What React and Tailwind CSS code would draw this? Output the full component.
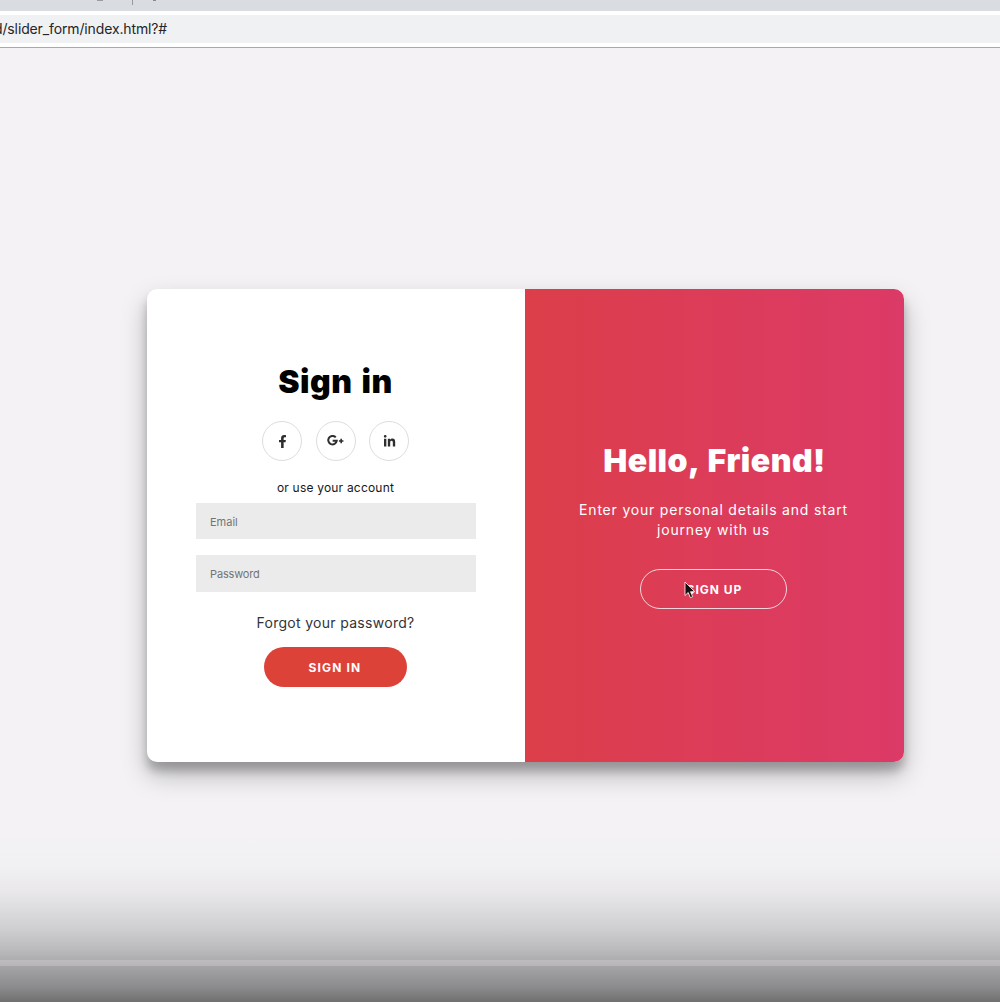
import { FaFacebookF, FaLinkedinIn } from "react-icons/fa";

function SocialLink({ label, children }) {
  return (
    <a href="#" aria-label={label} className="flex size-10 items-center justify-center rounded-full border border-[#dddddd] text-[#2e2e2e]">
      {children}
    </a>
  );
}

function GooglePlus() {
  return (
    <svg viewBox="0 0 18 12" className="h-[11.5px] w-[17px]" fill="none" stroke="currentColor" strokeWidth="2.1">
      <path d="M9.3 2.5A4.5 4.5 0 1 0 10.3 6.1H6" />
      <path d="M12.6 6.2h4.8M15 3.8v4.8" strokeWidth="1.7" />
    </svg>
  );
}

function Cursor() {
  return (
    <svg viewBox="0 0 12 18" className="absolute left-[43px] top-[11px] h-[18px] w-3">
      <path d="M1 1v13.5l3.2-3 2.2 5.2 2.3-1-2.2-5h4.3z" fill="#111" stroke="#fff" strokeWidth="0.8" />
    </svg>
  );
}

function BrowserBar() {
  return (
    <header className="h-12 border-b border-[#a9a9ab] bg-white">
      <div className="flex h-[11px] items-start bg-[#d9dce1]">
        <span className="ml-[97px] h-px w-1.5 bg-[#999ca1]" />
        <span className="ml-[29px] h-[5px] w-px bg-[#96999e]" />
        <span className="ml-5 h-px w-[3px] bg-[#85888d]" />
      </div>
      <div className="mt-1 flex h-7 items-center overflow-hidden bg-[#eff1f3]">
        <span className="-ml-[6px] whitespace-nowrap text-[14px] leading-7 tracking-[-0.13px] text-[#252529]">d/slider_form/index.html?#</span>
      </div>
    </header>
  );
}

export default function App() {
  return (
    <div className="relative h-[1002px] w-[1000px] overflow-hidden bg-[#f4f2f5] font-['Inter',sans-serif]">
      <BrowserBar />
      <main className="ml-[147px] mt-[241px] flex h-[473px] w-[757px] overflow-hidden rounded-[10px] bg-white shadow-[0_13px_26px_rgba(0,0,0,0.25),0_9px_10px_rgba(0,0,0,0.22)]">
        <form className="flex w-[378px] flex-col items-center pl-12 pr-[49px] pt-[73px]">
          <h1 className="h-10 whitespace-nowrap text-[32px] font-black leading-10 tracking-[0.5px] [word-spacing:2px] text-black">Sign in</h1>
          <div className="mt-[19px] flex gap-[13.5px]">
            <SocialLink label="Facebook"><FaFacebookF size={13} /></SocialLink>
            <SocialLink label="Google Plus"><GooglePlus /></SocialLink>
            <SocialLink label="LinkedIn"><FaLinkedinIn size={13} /></SocialLink>
          </div>
          <span className="mt-[17px] h-5 text-[12px] leading-5 tracking-[0.2px] text-[#171719]">or use your account</span>
          <input aria-label="Email" placeholder="Email" className="ml-px mt-[5px] h-9 w-[280px] shrink-0 bg-[#ebebeb] px-[14px] pt-px text-[11px] placeholder:text-[#747474]" />
          <input aria-label="Password" type="password" placeholder="Password" className="ml-px mt-4 h-[37px] w-[280px] shrink-0 bg-[#ebebeb] px-[14px] text-[11px] tracking-[-0.15px] placeholder:text-[#747474]" />
          <a href="#" className="mt-[21px] h-5 whitespace-nowrap text-[14px] leading-5 tracking-[0.3px] text-[#333338]">Forgot your password?</a>
          <button type="button" className="mr-px mt-[14px] h-10 w-[143px] rounded-full bg-[#dc4238] pt-px text-[12px] font-bold tracking-[1.15px] text-white">SIGN IN</button>
        </form>
        <section className="flex w-[379px] flex-col items-center bg-linear-to-r from-[#dc3e49] to-[#dc3a67] pr-0.5 pt-[152px] text-white">
          <h2 className="ml-0.5 h-10 whitespace-nowrap text-[32px] font-black leading-10 tracking-[0.5px] [word-spacing:2px]">Hello, Friend!</h2>
          <p className="mt-[19px] whitespace-nowrap text-center text-[14px] leading-5 tracking-[0.8px]">Enter your personal details and start<br />journey with us</p>
          <button type="button" className="relative mt-[29px] h-10 w-[147px] rounded-full border border-[#f2d5dc] pl-0.5 pt-px text-[12px] font-bold tracking-[1px]">
            SIGN UP
            <Cursor />
          </button>
        </section>
      </main>
      <div className="pointer-events-none absolute inset-x-0 bottom-0 flex h-[172px] flex-col">
        <div className="h-[130px] bg-[linear-gradient(to_bottom,#f4f2f5_0px,#f1f0f2_35px,#e9e7ea_62px,#dcdbdd_80px,#cecdcf_100px,#bab9bb_120px,#adacae_130px)]" />
        <div className="h-1.5 bg-linear-to-b from-[#bebcbe] to-[#b7b5b7]" />
        <div className="h-9 bg-[linear-gradient(to_bottom,#a5a4a6,#8a898b_22px,#707070)]" />
      </div>
    </div>
  );
}
